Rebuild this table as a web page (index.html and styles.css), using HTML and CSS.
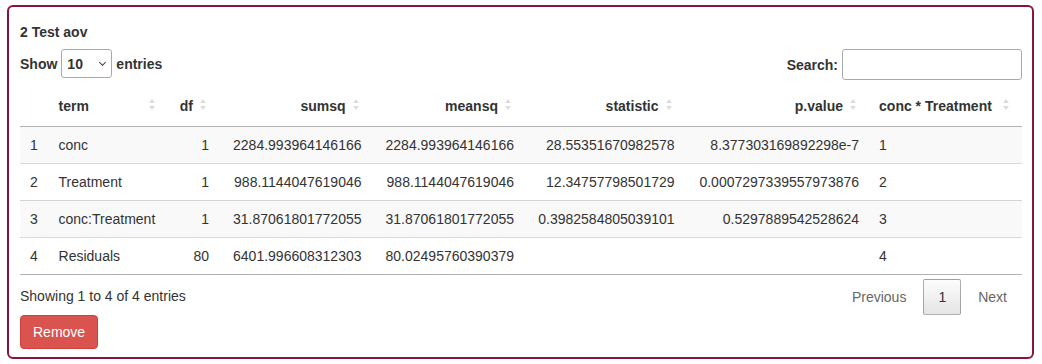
FILE: index.html
```html
<!DOCTYPE html>
<html lang="en">
<head>
<meta charset="utf-8">
<title>2 Test aov</title>
<link rel="stylesheet" href="styles.css">
</head>
<body>
<div class="panel">
  <div class="title">2 Test aov</div>
  <div class="controls">
    <label class="length">Show <span class="len-wrap"><select class="len-select"><option>10</option><option>25</option><option>50</option><option>100</option></select></span> entries</label>
    <label class="filter">Search:<input class="search" type="search"></label>
  </div>
  <table class="dt">
    <thead>
      <tr>
        <th class="idx"></th>
        <th class="sorting">term</th>
        <th class="sorting right">df</th>
        <th class="sorting right">sumsq</th>
        <th class="sorting right">meansq</th>
        <th class="sorting right">statistic</th>
        <th class="sorting right">p.value</th>
        <th class="sorting">conc * Treatment</th>
      </tr>
    </thead>
    <tbody>
      <tr class="odd">
        <td>1</td><td>conc</td><td class="right">1</td><td class="right">2284.993964146166</td><td class="right">2284.993964146166</td><td class="right">28.55351670982578</td><td class="right">8.377303169892298e-7</td><td>1</td>
      </tr>
      <tr>
        <td>2</td><td>Treatment</td><td class="right">1</td><td class="right">988.1144047619046</td><td class="right">988.1144047619046</td><td class="right">12.34757798501729</td><td class="right">0.0007297339557973876</td><td>2</td>
      </tr>
      <tr class="odd">
        <td>3</td><td>conc:Treatment</td><td class="right">1</td><td class="right">31.87061801772055</td><td class="right">31.87061801772055</td><td class="right">0.3982584805039101</td><td class="right">0.5297889542528624</td><td>3</td>
      </tr>
      <tr>
        <td>4</td><td>Residuals</td><td class="right">80</td><td class="right">6401.996608312303</td><td class="right">80.02495760390379</td><td class="right"></td><td class="right"></td><td>4</td>
      </tr>
    </tbody>
  </table>
  <div class="footer">
    <div class="info">Showing 1 to 4 of 4 entries</div>
    <div class="paginate">
      <span class="pbtn disabled">Previous</span>
      <span class="pbtn current">1</span>
      <span class="pbtn disabled">Next</span>
    </div>
  </div>
  <button class="btn-remove" type="button">Remove</button>
</div>
</body>
</html>
```
FILE: styles.css
```css
html, body {
  margin: 0;
  padding: 0;
}

body {
  font-family: "Liberation Sans", Arial, Helvetica, sans-serif;
  font-size: 14px;
  line-height: 20px;
  color: #333;
  background: #fff;
}

.panel {
  margin: 5px 8px 5px 7px;
  border: 2px solid #8a1538;
  border-radius: 6px;
  padding: 15px 10px 8px 11px;
  display: flex;
  flex-direction: column;
}

.title {
  font-weight: bold;
  margin-bottom: 7px;
}

.controls {
  display: flex;
  justify-content: space-between;
  align-items: flex-start;
  margin-bottom: 6px;
}

.length,
.filter {
  display: flex;
  align-items: center;
  font-weight: bold;
}

.len-wrap {
  position: relative;
  display: inline-flex;
  margin: 0 4px;
}

.len-wrap::after {
  content: "";
  position: absolute;
  left: 39px;
  top: 11px;
  box-sizing: border-box;
  width: 5px;
  height: 5px;
  border-right: 1px solid #444;
  border-bottom: 1px solid #444;
  transform: rotate(45deg);
  pointer-events: none;
}

.len-select {
  -webkit-appearance: none;
  appearance: none;
  box-sizing: border-box;
  width: 51px;
  height: 29px;
  margin: 0;
  padding: 4px 4px 4px 5px;
  border: 1px solid #aaa;
  border-radius: 3px;
  background-color: transparent;
  color: inherit;
  font-family: inherit;
  font-size: 14px;
  font-weight: bold;
}

.search {
  box-sizing: border-box;
  width: 180px;
  height: 31px;
  margin: 0 0 0 4px;
  padding: 5px;
  border: 1px solid #aaa;
  border-radius: 3px;
  background-color: transparent;
  font-family: inherit;
  font-size: 14px;
}

.dt {
  width: 100%;
  border-collapse: separate;
  border-spacing: 0;
  border-bottom: 1px solid rgba(0, 0, 0, 0.3);
}

.dt th {
  position: relative;
  padding: 10px;
  text-align: left;
  font-weight: bold;
  border-bottom: 1px solid rgba(0, 0, 0, 0.3);
  white-space: nowrap;
}

.dt th.sorting {
  padding-right: 26px;
}

.dt th.sorting::before,
.dt th.sorting::after {
  content: "";
  position: absolute;
  right: 13px;
  width: 0;
  height: 0;
  border-left: 3px solid transparent;
  border-right: 3px solid transparent;
}

.dt th.sorting::before {
  bottom: 23px;
  border-bottom: 4px solid #dcdcdc;
}

.dt th.sorting::after {
  top: 20px;
  border-top: 4px solid #dcdcdc;
}

.dt td {
  padding: 8px 10px;
  border-top: 1px solid rgba(0, 0, 0, 0.15);
  white-space: nowrap;
}

.dt tbody tr:first-child td {
  border-top: none;
}

.dt tr.odd td {
  background: #f9f9f9;
}

.dt .right {
  text-align: right;
}

.footer {
  display: flex;
  justify-content: space-between;
  align-items: flex-start;
}

.info {
  padding-top: 10.5px;
}

.paginate {
  display: flex;
  padding-top: 4px;
}

.pbtn {
  box-sizing: border-box;
  display: inline-block;
  min-width: 1.5em;
  padding: 7px 14px;
  margin-left: 2px;
  border: 1px solid transparent;
  border-radius: 2px;
  text-align: center;
}

.pbtn.disabled {
  color: #666;
}

.pbtn.current {
  color: #333;
  border: 1px solid rgba(0, 0, 0, 0.3);
  background: linear-gradient(to bottom, rgba(230, 230, 230, 0.1) 0%, rgba(0, 0, 0, 0.1) 100%);
}

.btn-remove {
  align-self: flex-start;
  padding: 6px 12px;
  font-family: inherit;
  font-size: 14px;
  line-height: 20px;
  color: #fff;
  background: #d9534f;
  border: 1px solid #d43f3a;
  border-radius: 4px;
}
```
